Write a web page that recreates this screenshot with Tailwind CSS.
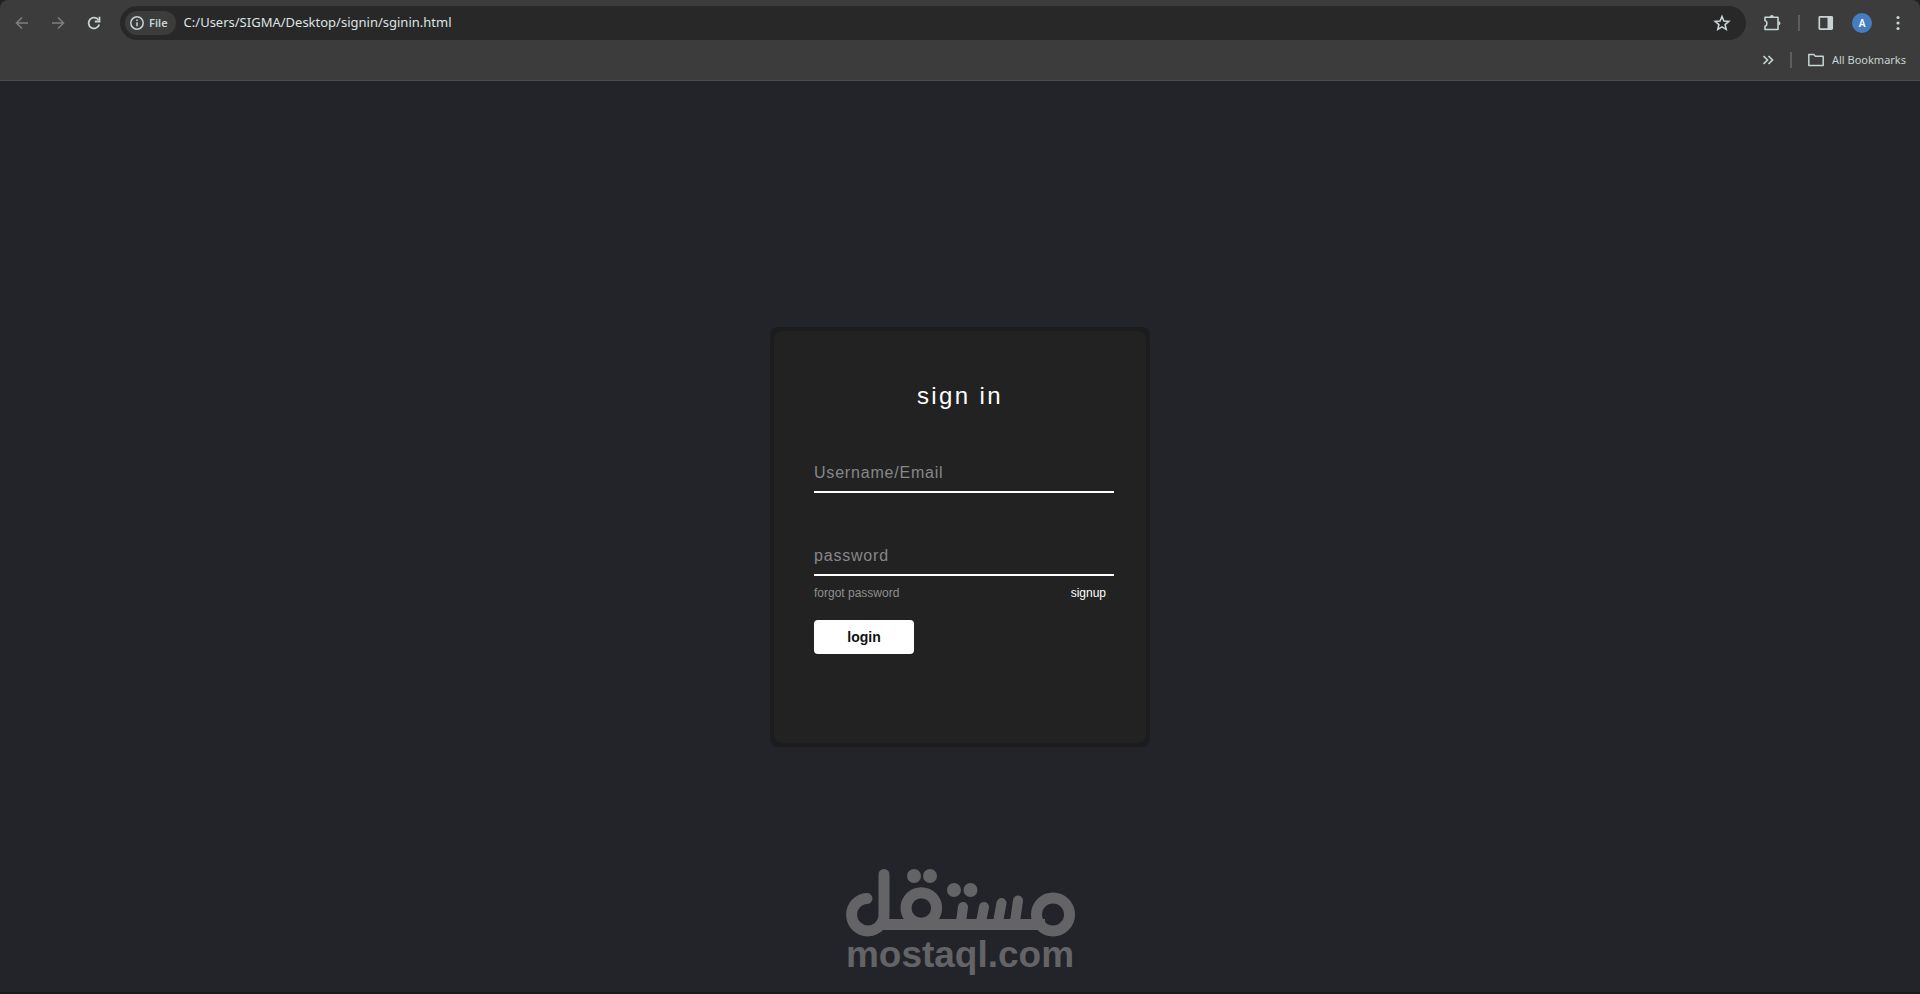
<!DOCTYPE html>
<html lang="en">
<head>
  <meta charset="UTF-8">
  <meta name="viewport" content="width=device-width, initial-scale=1.0">
  <title>sign in</title>
  <script src="https://cdn.jsdelivr.net/npm/@tailwindcss/browser@4"></script>
</head>
<body class="flex flex-col min-h-screen bg-[#23242a] font-['Liberation_Sans',Arial,sans-serif]">

  <!-- Browser bar -->
  <header class="bg-[#1f2020] text-[#c7d3d4] font-['Noto_Sans',sans-serif]">
    <div class="bg-[#3c3c3c] border-b border-[#4b4c4f] rounded-t-lg pt-[6px]">
      <!-- Address row -->
      <div class="flex items-center h-[34px] px-3">
        <nav class="flex items-center gap-4 mr-4">
          <button type="button" aria-label="Back" class="w-5 h-5 text-[#7d7d7d]">
            <svg viewBox="0 0 20 20" class="w-5 h-5" fill="none" stroke="currentColor" stroke-width="1.6"><path d="M16 10H5M10 4.5L4.500 10l5.500 5.500"/></svg>
          </button>
          <button type="button" aria-label="Forward" class="w-5 h-5 text-[#7d7d7d]">
            <svg viewBox="0 0 20 20" class="w-5 h-5" fill="none" stroke="currentColor" stroke-width="1.6"><path d="M4 10h11M10 4.500l5.500 5.500L10 15.500"/></svg>
          </button>
          <button type="button" aria-label="Reload" class="w-5 h-5">
            <svg viewBox="0 0 20 20" class="w-5 h-5" fill="none" stroke="currentColor" stroke-width="1.8"><path d="M15.200 11.500A5.400 5.400 0 1 1 14.500 7"/><path d="M15.500 3.800v4.700h-4.700" /></svg>
          </button>
        </nav>
        <div class="flex flex-1 items-center h-[34px] pl-[5px] pr-[14px] bg-[#282828] rounded-full">
          <button type="button" class="flex items-center gap-[5px] h-6 pl-[5px] pr-2 rounded-full bg-[#3c3c3c] text-[11px] font-semibold">
            <svg viewBox="0 0 14 14" class="w-[14px] h-[14px]" fill="none" stroke="currentColor" stroke-width="1.5"><circle cx="7" cy="7" r="6.200"/><path d="M7 6.300v4M7 3.600v1.500"/></svg>
            File
          </button>
          <input type="text" aria-label="Address" value="C:/Users/SIGMA/Desktop/signin/sginin.html" class="flex-1 ml-2 bg-transparent outline-none text-[13px] text-[#dfe3e3]">
          <button type="button" aria-label="Bookmark this tab">
            <svg viewBox="0 0 20 20" class="w-5 h-5" fill="none" stroke="currentColor" stroke-width="1.6"><path d="M10 3.500l1.900 4.500 4.900.4-3.700 3.200 1.100 4.800L10 13.900l-4.200 2.500 1.100-4.800-3.700-3.200 4.900-.4z"/></svg>
          </button>
        </div>
        <div class="flex items-center ml-4">
          <button type="button" aria-label="Extensions">
            <svg viewBox="0 0 20 20" class="w-5 h-5" fill="none" stroke="currentColor" stroke-width="1.6"><path d="M3 4.300h13v12.200H3v-3.300c2.600-.9 2.600-4.700 0-5.600z" stroke-linejoin="round"/><path d="M7.800 4a2 2 0 0 1 4 0zM16.500 8.200a2 2 0 0 1 0 4z" fill="currentColor" stroke="none"/></svg>
          </button>
          <span class="w-0.5 h-4 mx-4 bg-[#5c5d5e]"></span>
          <button type="button" aria-label="Side panel">
            <svg viewBox="0 0 20 20" class="w-5 h-5" fill="none" stroke="currentColor" stroke-width="1.7"><rect x="3.300" y="3.800" width="12.900" height="12.400" rx=".6"/><path d="M11.500 4h4.500v12h-4.500z" fill="currentColor" stroke="none"/></svg>
          </button>
          <button type="button" aria-label="Profile" class="w-5 h-5 ml-4 rounded-full bg-[#457ebf] text-white text-[10px] leading-5 font-semibold">A</button>
          <button type="button" aria-label="Menu" class="ml-4">
            <svg viewBox="0 0 20 20" class="w-5 h-5" fill="currentColor"><circle cx="10" cy="4.500" r="1.600"/><circle cx="10" cy="10" r="1.600"/><circle cx="10" cy="15.500" r="1.600"/></svg>
          </button>
        </div>
      </div>
      <!-- Bookmarks row -->
      <div class="flex items-center justify-end h-10 pr-[14px]">
        <button type="button" aria-label="More bookmarks">
          <svg viewBox="0 0 12 12" class="w-3 h-3" fill="none" stroke="currentColor" stroke-width="1.7"><path d="M1.500 2l4 4-4 4M6.500 2l4 4-4 4"/></svg>
        </button>
        <span class="w-0.5 h-4 mx-4 bg-[#5c5d5e]"></span>
        <button type="button" class="flex items-center gap-2 text-[11px]">
          <svg viewBox="0 0 16 14" class="w-4 h-[14px]" fill="none" stroke="currentColor" stroke-width="1.5" stroke-linejoin="round"><path d="M.8 1.500h5l1.700 1.800h7.700v9.200H.8z"/></svg>
          All Bookmarks
        </button>
      </div>
    </div>
  </header>

  <main class="relative flex flex-1 items-center justify-center border-b-2 border-[#1b1a1c]">

    <!-- Sign in box -->
    <div class="p-1 bg-[#1c1c1c] rounded-lg">
      <form class="flex flex-col w-[372px] min-h-[412px] pt-[51px] pb-10 pl-10 pr-8 bg-[#222] rounded-lg">
        <h2 class="pr-2 text-2xl leading-7 text-center text-white tracking-widest">sign in</h2>

        <div class="mt-[46px] border-b-2 border-white">
          <input type="text" aria-label="Username/Email" placeholder="Username/Email" class="block w-full h-[35px] bg-transparent outline-none text-base tracking-wider text-white placeholder:text-[#87878a]">
        </div>
        <div class="mt-[46px] border-b-2 border-white">
          <input type="password" aria-label="password" placeholder="password" class="block w-full h-[35px] bg-transparent outline-none text-base tracking-wider text-white placeholder:text-[#87878a]">
        </div>

        <div class="flex justify-between mt-[10px] pr-2 text-xs leading-[14px]">
          <a href="#" class="text-[#8f8f8f]">forgot password</a>
          <a href="#" class="text-white">signup</a>
        </div>

        <button type="submit" class="w-[100px] h-[34px] mt-5 rounded-sm bg-white text-sm font-bold text-[#111]">login</button>
      </form>
    </div>

    <!-- Watermark -->
    <div class="absolute bottom-[19px] left-1/2 -translate-x-1/2 w-[230px] text-[#646466]">
      <svg viewBox="15 12 230 69" class="block w-full" fill="none" stroke="currentColor" stroke-width="11" stroke-linecap="round">
        <path d="M37 42.500A16.200 16.200 0 1 0 54 58V18.500"/>
        <path d="M50 68.500H215" stroke-linecap="butt"/>
        <circle cx="223" cy="58.500" r="16.500"/>
        <circle cx="91.300" cy="52" r="15.300"/>
        <path d="M133 51l-2 15M154 51l-3 15M171.500 47l-3.500 19M188 44.500l-3 21" stroke-width="10"/>
        <g fill="currentColor" stroke="none">
          <circle cx="84" cy="20" r="7"/><circle cx="100" cy="20" r="7"/>
          <circle cx="124" cy="34" r="7"/><circle cx="140.500" cy="34" r="7"/>
        </g>
      </svg>
      <p class="text-[37px] leading-9 font-bold text-center whitespace-nowrap">mostaql.com</p>
    </div>
  </main>

</body>
</html>
